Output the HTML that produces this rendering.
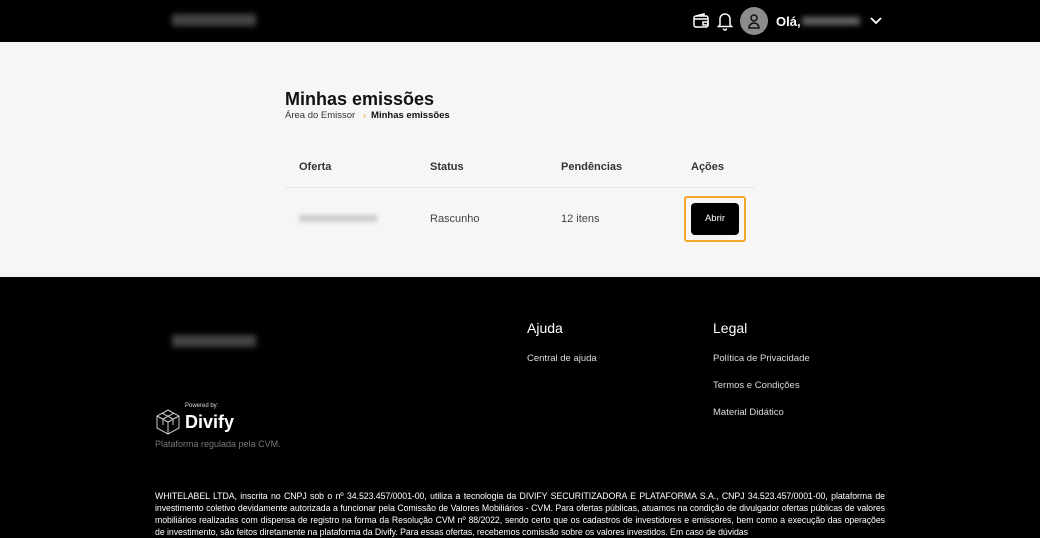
<!DOCTYPE html>
<html><head><meta charset="utf-8"><style>
body{margin:0;width:1040px;height:534px;overflow:hidden;font-family:"Liberation Sans",sans-serif;background:#000}
.top{height:42px;background:#000;position:relative}
.main{height:235px;background:#f6f6f6;position:relative}
.foot{height:257px;background:#000;position:relative;color:#fff}
.abs{position:absolute}
.blur{filter:blur(3px)}
</style></head><body>
<div class="top">
 <div class="abs blur" style="left:172px;top:14px;width:84px;height:12px;background:#444"></div>
 <svg class="abs" style="left:692px;top:12px" width="18" height="18" viewBox="0 0 18 18" fill="none" stroke="#fff" stroke-width="1.5"><rect x="2" y="4" width="14" height="11" rx="2"/><path d="M2 7h14M11 10h5v3h-5z"/><path d="M4 4l8-2v2"/></svg>
 <svg class="abs" style="left:716px;top:11px" width="18" height="20" viewBox="0 0 18 20" fill="none" stroke="#fff" stroke-width="1.5"><path d="M4 14V8a5 5 0 0110 0v6l1.5 1.5h-13z"/><path d="M7.5 17.5a1.5 1.5 0 003 0"/></svg>
 <div class="abs" style="left:740px;top:7px;width:28px;height:28px;border-radius:50%;background:#8c8c8c"></div>
 <svg class="abs" style="left:746px;top:13px" width="16" height="16" viewBox="0 0 16 16" fill="none" stroke="#111" stroke-width="1.5"><circle cx="8" cy="5" r="3"/><path d="M3 15a5 5 0 0110 0z"/></svg>
 <div class="abs" style="left:776px;top:14px;font-weight:bold;font-size:13px;color:#fff">Olá,</div>
 <div class="abs blur" style="left:802px;top:17px;width:58px;height:8px;background:#666"></div>
 <svg class="abs" style="left:870px;top:16px" width="12" height="9" viewBox="0 0 12 9" fill="none" stroke="#fff" stroke-width="1.8"><path d="M1 2l5 5 5-5"/></svg>
</div>
<div class="main">
 <div class="abs" style="left:285px;top:47px;font-size:18px;font-weight:bold;color:#111">Minhas emissões</div>
 <div class="abs" style="left:285px;top:68px;font-size:9.5px;color:#333">Área do Emissor <span style="color:#f5a623;margin:0 5px">›</span><b style="color:#111">Minhas emissões</b></div>
 <div class="abs" style="left:299px;top:119px;font-size:11px;font-weight:bold;color:#333">Oferta</div>
 <div class="abs" style="left:430px;top:119px;font-size:11px;font-weight:bold;color:#333">Status</div>
 <div class="abs" style="left:561px;top:119px;font-size:11px;font-weight:bold;color:#333">Pendências</div>
 <div class="abs" style="left:691px;top:119px;font-size:11px;font-weight:bold;color:#333">Ações</div>
 <div class="abs" style="left:285px;top:145px;width:470px;height:1px;background:#e6e6e6"></div>
 <div class="abs" style="left:299px;top:173px;width:78px;height:7px;background:#ccc;filter:blur(2px)"></div>
 <div class="abs" style="left:430px;top:171px;font-size:11px;color:#444">Rascunho</div>
 <div class="abs" style="left:561px;top:171px;font-size:11px;color:#444">12 itens</div>
 <div class="abs" style="left:684px;top:154px;width:58px;height:42px;border:2px solid #f5a623;border-radius:3px"></div>
 <div class="abs" style="left:691px;top:161px;width:48px;height:32px;background:#000;border-radius:4px;color:#fff;font-size:9.5px;text-align:center;line-height:32px">Abrir</div>
</div>
<div class="foot">
 <div class="abs blur" style="left:172px;top:58px;width:84px;height:12px;background:#444"></div>
 <div class="abs" style="left:527px;top:43px;font-size:14px">Ajuda</div>
 <div class="abs" style="left:527px;top:76px;font-size:9.5px;color:#ddd">Central de ajuda</div>
 <div class="abs" style="left:713px;top:43px;font-size:14px">Legal</div>
 <div class="abs" style="left:713px;top:76px;font-size:9.5px;color:#ddd">Política de Privacidade</div>
 <div class="abs" style="left:713px;top:103px;font-size:9.5px;color:#ddd">Termos e Condições</div>
 <div class="abs" style="left:713px;top:130px;font-size:9.5px;color:#ddd">Material Didático</div>
 <div class="abs" style="left:185px;top:126px;font-size:6px;color:#ddd">Powered by:</div>
 <svg class="abs" style="left:154px;top:131px" width="28" height="28" viewBox="0 0 28 28" fill="none" stroke="#ccc" stroke-width="1"><path d="M14 2l11 6v12l-11 6-11-6V8z"/><path d="M3 8l11 6 11-6M14 14v12M8 5l11 6v6M20 5L9 11v6"/></svg>
 <div class="abs" style="left:185px;top:135px;font-size:18px;font-weight:bold">Divify</div>
 <div class="abs" style="left:155px;top:162px;font-size:9px;color:#777">Plataforma regulada pela CVM.</div>
 <div class="abs" style="left:155px;top:213px;width:730px;font-size:8.75px;line-height:12px;color:#fff;text-align:justify;letter-spacing:-0.05px">WHITELABEL LTDA, inscrita no CNPJ sob o nº 34.523.457/0001-00, utiliza a tecnologia da DIVIFY SECURITIZADORA E PLATAFORMA S.A., CNPJ 34.523.457/0001-00, plataforma de investimento coletivo devidamente autorizada a funcionar pela Comissão de Valores Mobiliários - CVM. Para ofertas públicas, atuamos na condição de divulgador ofertas públicas de valores mobiliários realizadas com dispensa de registro na forma da Resolução CVM nº 88/2022, sendo certo que os cadastros de investidores e emissores, bem como a execução das operações de investimento, são feitos diretamente na plataforma da Divify. Para essas ofertas, recebemos comissão sobre os valores investidos. Em caso de dúvidas</div>
</div>
</body></html>
